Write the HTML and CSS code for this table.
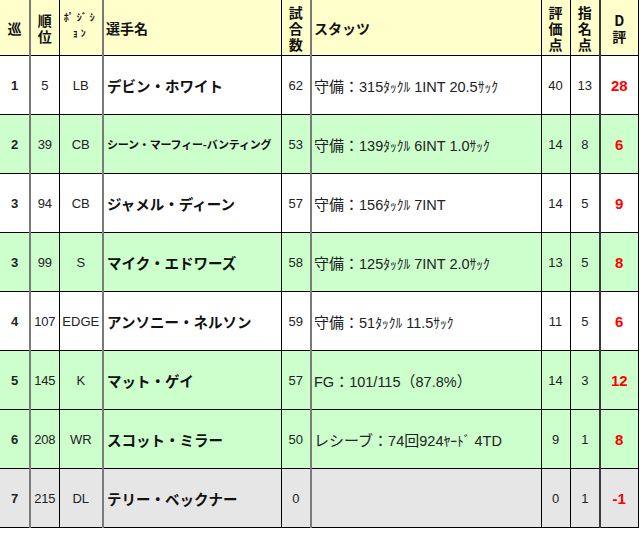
FILE: index.html
```html
<!DOCTYPE html>
<html lang="ja">
<head>
<meta charset="utf-8">
<link rel="stylesheet" href="styles.css">
</head>
<body>
<table class="draft">
  <colgroup>
    <col class="w-round"><col class="w-rank"><col class="w-pos"><col class="w-name"><col class="w-games"><col class="w-stats"><col class="w-eval"><col class="w-pick"><col class="w-d">
  </colgroup>
  <thead>
    <tr class="head">
      <th class="sep-g">巡</th>
      <th class="sep-b">順<br>位</th>
      <th class="pos sep-g">ﾎﾟｼﾞｼ<br>ｮﾝ</th>
      <th class="left sep-b">選手名</th>
      <th class="sep-g">試<br>合<br>数</th>
      <th class="left sep-b">スタッツ</th>
      <th class="sep-b">評<br>価<br>点</th>
      <th class="sep-d">指<br>名<br>点</th>
      <th class="last">D<br>評</th>
    </tr>
  </thead>
  <tbody>
    <tr class="white">
      <td class="round sep-g">1</td><td class="rank sep-b">5</td><td class="pos-v sep-g">LB</td>
      <td class="name sep-b">デビン・ホワイト</td><td class="num sep-g">62</td>
      <td class="stats sep-b"><span class="jp">守備：</span>315<span class="hk">ﾀｯｸﾙ</span> 1INT 20.5<span class="hk">ｻｯｸ</span></td>
      <td class="num sep-b">40</td><td class="num sep-d">13</td><td class="dval last">28</td>
    </tr>
    <tr class="green">
      <td class="round sep-g">2</td><td class="rank sep-b">39</td><td class="pos-v sep-g">CB</td>
      <td class="name small sep-b">シーン・マーフィー-バンティング</td><td class="num sep-g">53</td>
      <td class="stats sep-b"><span class="jp">守備：</span>139<span class="hk">ﾀｯｸﾙ</span> 6INT 1.0<span class="hk">ｻｯｸ</span></td>
      <td class="num sep-b">14</td><td class="num sep-d">8</td><td class="dval last">6</td>
    </tr>
    <tr class="white">
      <td class="round sep-g">3</td><td class="rank sep-b">94</td><td class="pos-v sep-g">CB</td>
      <td class="name sep-b">ジャメル・ディーン</td><td class="num sep-g">57</td>
      <td class="stats sep-b"><span class="jp">守備：</span>156<span class="hk">ﾀｯｸﾙ</span> 7INT</td>
      <td class="num sep-b">14</td><td class="num sep-d">5</td><td class="dval last">9</td>
    </tr>
    <tr class="green">
      <td class="round sep-g">3</td><td class="rank sep-b">99</td><td class="pos-v sep-g">S</td>
      <td class="name sep-b">マイク・エドワーズ</td><td class="num sep-g">58</td>
      <td class="stats sep-b"><span class="jp">守備：</span>125<span class="hk">ﾀｯｸﾙ</span> 7INT 2.0<span class="hk">ｻｯｸ</span></td>
      <td class="num sep-b">13</td><td class="num sep-d">5</td><td class="dval last">8</td>
    </tr>
    <tr class="white">
      <td class="round sep-g">4</td><td class="rank sep-b">107</td><td class="pos-v sep-g">EDGE</td>
      <td class="name sep-b">アンソニー・ネルソン</td><td class="num sep-g">59</td>
      <td class="stats sep-b"><span class="jp">守備：</span>51<span class="hk">ﾀｯｸﾙ</span> 11.5<span class="hk">ｻｯｸ</span></td>
      <td class="num sep-b">11</td><td class="num sep-d">5</td><td class="dval last">6</td>
    </tr>
    <tr class="green">
      <td class="round sep-g">5</td><td class="rank sep-b">145</td><td class="pos-v sep-g">K</td>
      <td class="name sep-b">マット・ゲイ</td><td class="num sep-g">57</td>
      <td class="stats sep-b">FG<span class="jp">：</span>101/115<span class="jp">（</span>87.8%<span class="jp">）</span></td>
      <td class="num sep-b">14</td><td class="num sep-d">3</td><td class="dval last">12</td>
    </tr>
    <tr class="green">
      <td class="round sep-g">6</td><td class="rank sep-b">208</td><td class="pos-v sep-g">WR</td>
      <td class="name sep-b">スコット・ミラー</td><td class="num sep-g">50</td>
      <td class="stats sep-b"><span class="jp">レシーブ：</span>74<span class="jp">回</span>924<span class="hk">ﾔｰﾄﾞ</span> 4TD</td>
      <td class="num sep-b">9</td><td class="num sep-d">1</td><td class="dval last">8</td>
    </tr>
    <tr class="gray">
      <td class="round sep-g">7</td><td class="rank sep-b">215</td><td class="pos-v sep-g">DL</td>
      <td class="name sep-b">テリー・ベックナー</td><td class="num sep-g">0</td>
      <td class="stats sep-b"></td>
      <td class="num sep-b">0</td><td class="num sep-d">1</td><td class="dval last">-1</td>
    </tr>
  </tbody>
</table>
</body>
</html>
```

FILE: styles.css
```css
html, body {
  margin: 0;
  padding: 0;
  background: #ffffff;
}

.draft {
  border-collapse: collapse;
  table-layout: fixed;
  width: 638px;
  font-family: "Liberation Sans", "Noto Sans CJK JP", sans-serif;
  color: #222222;
}

.w-round { width: 30px; }
.w-rank { width: 29px; }
.w-pos { width: 44px; }
.w-name { width: 178px; }
.w-games { width: 30px; }
.w-stats { width: 230px; }
.w-eval { width: 29px; }
.w-pick { width: 30px; }
.w-d { width: 38px; }

.draft th,
.draft td {
  padding: 0;
  text-align: center;
  vertical-align: middle;
  border-bottom: 1px solid #000000;
  overflow: hidden;
  white-space: nowrap;
}

.sep-b { border-right: 1px solid #000000; }
.sep-g { border-right: 2px solid #7a7a7a; }
.sep-d { border-right: 2px solid #3a3a3a; }
.last { border-right: 1px solid #000000; }

.head th {
  height: 55px;
  background: #ffffcc;
  font-family: "Noto Sans CJK JP", sans-serif;
  font-weight: bold;
  font-size: 14px;
  line-height: 16px;
  color: #111111;
}

.head th.left {
  text-align: left;
  padding-left: 2px;
}

.head th.pos {
  font-size: 10px;
  line-height: 16px;
  letter-spacing: 3px;
  padding-bottom: 6px;
  height: 49px;
}

.draft tbody td {
  height: 58px;
  font-size: 13px;
}

.white td { background: #ffffff; }
.green td { background: #ccffcc; }
.gray td { background: #e6e6e6; }

.round {
  font-weight: bold;
  font-size: 13px;
}

.rank {
  font-size: 12px;
  letter-spacing: -0.3px;
}

.pos-v {
  font-size: 14px;
}

.draft td.name {
  text-align: left;
  padding-left: 3px;
  font-family: "Noto Sans CJK JP", sans-serif;
  font-weight: bold;
  font-size: 14.5px;
  color: #111111;
}

.draft td.name.small {
  font-size: 11px;
  letter-spacing: -0.2px;
}

.draft td.num {
  font-size: 13px;
}

.draft td.stats {
  text-align: left;
  padding-left: 2px;
  font-family: "Liberation Sans", "Noto Sans CJK JP", sans-serif;
  font-size: 14.5px;
}

.stats .jp {
  font-family: "Noto Sans CJK JP", sans-serif;
  font-size: 15px;
}

.stats .hk {
  font-family: "Noto Sans CJK JP", sans-serif;
  font-size: 13.5px;
}

.draft td.dval {
  color: #ff0000;
  font-weight: bold;
  font-size: 15px;
}
```
